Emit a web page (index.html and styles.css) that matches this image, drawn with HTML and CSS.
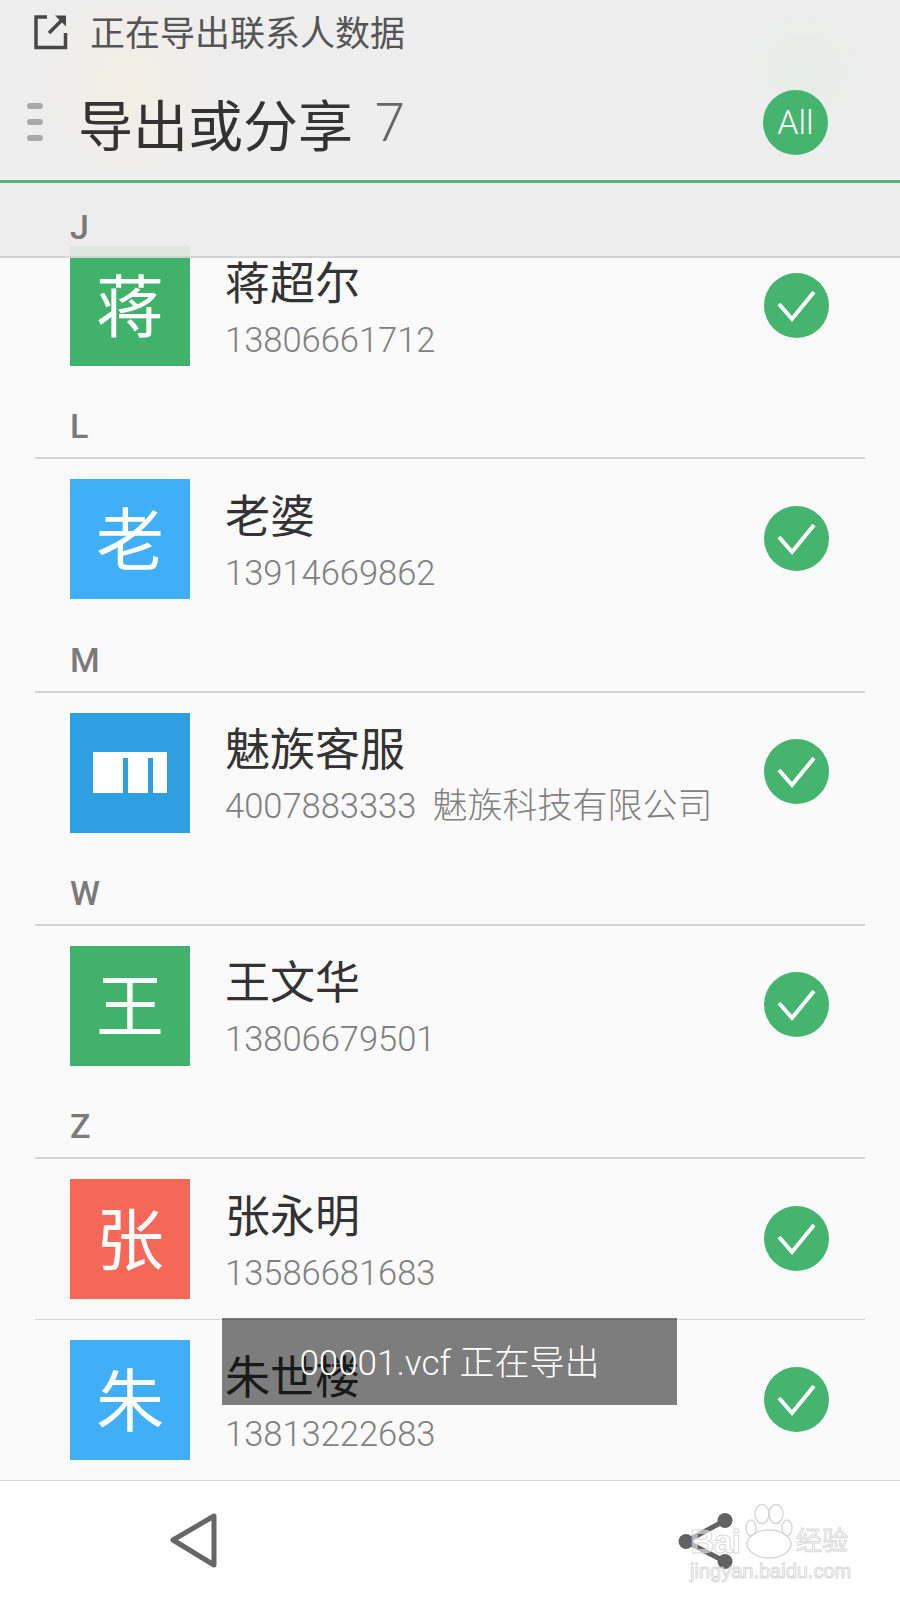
FILE: index.html

```html
<!DOCTYPE html>
<html>
<head>
<meta charset="UTF-8">
<title>导出或分享</title>
<link rel="stylesheet" href="styles.css">
</head>
<body>
<div class="page">

<header class="top">
  <div class="status">
    <svg class="status-icon" viewBox="0 0 34 36">
      <path d="M13 3H2V33.500H31.500V19" fill="none" stroke="#484848" stroke-width="3.500"/>
      <path d="M15 19L28 6" fill="none" stroke="#484848" stroke-width="3.500"/>
      <path d="M21 1.500H32V12.500Z" fill="#484848"/>
    </svg>
    <span>正在导出联系人数据</span>
  </div>
  <div class="titlebar">
    <div class="handle"><i></i><i></i><i></i></div>
    <h1>导出或分享</h1>
    <span class="count">7</span>
    <div class="all">All</div>
  </div>
</header>

<main class="list">
  <div class="pinned">J</div>

  <div class="row">
    <div class="avatar green">蒋</div>
    <div class="info"><div class="name">蒋超尔</div><div class="phone">13806661712</div></div>
    <svg class="tick" viewBox="0 0 65 65"><circle cx="32.500" cy="32.500" r="32.500"/><path d="M15 31L28 46L50 19"/></svg>
  </div>

  <div class="head">L</div>
  <div class="row">
    <div class="avatar blue">老</div>
    <div class="info"><div class="name">老婆</div><div class="phone">13914669862</div></div>
    <svg class="tick" viewBox="0 0 65 65"><circle cx="32.500" cy="32.500" r="32.500"/><path d="M15 31L28 46L50 19"/></svg>
  </div>

  <div class="head">M</div>
  <div class="row">
    <div class="avatar meizu">
      <svg class="meizu-logo" viewBox="0 0 74 41"><path d="M0 0H74V41H60V6H55V41H35V6H30V41H0Z" fill="#fff"/></svg>
    </div>
    <div class="info"><div class="name">魅族客服</div><div class="phone">4007883333<span class="company">魅族科技有限公司</span></div></div>
    <svg class="tick" viewBox="0 0 65 65"><circle cx="32.500" cy="32.500" r="32.500"/><path d="M15 31L28 46L50 19"/></svg>
  </div>

  <div class="head">W</div>
  <div class="row">
    <div class="avatar green">王</div>
    <div class="info"><div class="name">王文华</div><div class="phone">13806679501</div></div>
    <svg class="tick" viewBox="0 0 65 65"><circle cx="32.500" cy="32.500" r="32.500"/><path d="M15 31L28 46L50 19"/></svg>
  </div>

  <div class="head">Z</div>
  <div class="row divided">
    <div class="avatar red">张</div>
    <div class="info"><div class="name">张永明</div><div class="phone">13586681683</div></div>
    <svg class="tick" viewBox="0 0 65 65"><circle cx="32.500" cy="32.500" r="32.500"/><path d="M15 31L28 46L50 19"/></svg>
  </div>
  <div class="row">
    <div class="avatar blue">朱</div>
    <div class="info"><div class="name">朱世楼</div><div class="phone">13813222683</div></div>
    <svg class="tick" viewBox="0 0 65 65"><circle cx="32.500" cy="32.500" r="32.500"/><path d="M15 31L28 46L50 19"/></svg>
  </div>

  <div class="toast">00001.vcf 正在导出</div>
</main>

<footer class="bottom">
  <svg class="back" viewBox="0 0 52 60"><path d="M5 29L46 5V54Z"/></svg>
  <svg class="share" viewBox="0 0 60 64">
    <path d="M49 11.500L10 32.500L49 52.500" fill="none" stroke="#626262" stroke-width="5"/>
    <circle cx="49" cy="11.500" r="7.500"/><circle cx="10" cy="32.500" r="7.500"/><circle cx="49" cy="52.500" r="7.500"/>
  </svg>
</footer>

<div class="watermark">
  <div class="mark-top">
    <span class="mark-bai">Bai</span>
    <svg class="paw" viewBox="0 0 48 55">
      <ellipse cx="6" cy="24" rx="5" ry="8"/>
      <ellipse cx="17" cy="10" rx="7" ry="9.500"/>
      <ellipse cx="31" cy="10" rx="7" ry="9.500"/>
      <ellipse cx="42" cy="24" rx="5" ry="8"/>
      <ellipse cx="24" cy="40" rx="22" ry="14"/>
      <text x="24" y="47" text-anchor="middle">du</text>
    </svg>
    <span class="mark-cn">经验</span>
  </div>
  <div class="mark-url">jingyan.baidu.com</div>
</div>

</div>
</body>
</html>
```

FILE: styles.css

```css
body {
  margin: 0;
  font-family: Roboto, "Noto Sans CJK SC", sans-serif;
  background-color: #fafafa;
}
.page {
  position: relative;
  display: flex;
  flex-direction: column;
  width: 900px;
  height: 1600px;
  overflow: hidden;
}

/* top */
.top {
  height: 180px;
  flex: none;
  border-bottom: 3px solid #52b27a;
  background:
    radial-gradient(circle at 130px 85px, rgba(250, 240, 215, 0.45), rgba(250, 240, 215, 0) 90px),
    radial-gradient(circle at 805px 70px, rgba(222, 235, 225, 0.5), rgba(222, 235, 225, 0) 70px),
    #eeeeee;
}
.status {
  display: flex;
  align-items: center;
  height: 60px;
  padding-left: 34px;
  font-size: 35px;
  color: #555;
}
.status-icon {
  width: 34px;
  height: 36px;
  margin-right: 22px;
  margin-top: 4px;
}
.titlebar {
  display: flex;
  align-items: center;
  height: 120px;
  padding: 4px 72px 0 27px;
  box-sizing: border-box;
}
.handle {
  display: flex;
  flex-direction: column;
  gap: 10px;
  width: 16px;
}
.handle i {
  height: 6px;
  border-radius: 3px;
  background: #aaa;
}
h1 {
  margin: 0 0 0 35px;
  font-size: 55px;
  font-weight: 400;
  color: #333;
}
.count {
  margin-left: 22px;
  font-size: 54px;
  font-weight: 300;
  color: #666;
}
.all {
  width: 65px;
  height: 65px;
  margin-left: auto;
  border-radius: 50%;
  background: #44b46f;
  color: #fff;
  font-size: 34px;
  font-weight: 300;
  line-height: 65px;
  text-align: center;
}

/* list */
.list {
  position: relative;
  flex: 1;
  min-height: 0;
  padding-top: 43px;
  overflow: hidden;
}
.pinned {
  position: absolute;
  top: 0;
  left: 0;
  right: 0;
  z-index: 2;
  height: 75px;
  padding-left: 70px;
  box-sizing: border-box;
  border-bottom: 2px solid #d4d4d4;
  background: rgba(236, 236, 236, 0.92);
  color: #7a7a7a;
  font-size: 34px;
  font-weight: 500;
  line-height: 88px;
}
.head {
  display: flex;
  align-items: flex-end;
  height: 73.330px;
  margin: 0 35px;
  padding: 0 0 14px 35px;
  box-sizing: border-box;
  border-bottom: 2px solid #d4d4d4;
  color: #7a7a7a;
  font-size: 34px;
  font-weight: 500;
  line-height: 34px;
}
.row {
  display: flex;
  align-items: center;
  height: 160px;
  padding: 0 71px 0 70px;
}
.row.divided {
  position: relative;
}
.row.divided::after {
  content: "";
  position: absolute;
  left: 35px;
  right: 35px;
  bottom: -1px;
  height: 1px;
  background: #d4d4d4;
}
.row.divided + .row {
  margin-top: 1px;
}
.avatar {
  display: flex;
  align-items: center;
  justify-content: center;
  width: 120px;
  height: 120px;
  flex: none;
  padding-bottom: 8px;
  box-sizing: border-box;
  color: #fff;
  font-size: 68px;
}
.green { background: #41b26c; }
.blue { background: #41aef8; }
.red { background: #f56857; }
.meizu { background: #2e9fe0; padding-bottom: 0; }
.meizu-logo {
  width: 74px;
  height: 41px;
}
.info {
  display: flex;
  flex-direction: column;
  gap: 7px;
  margin-left: 35px;
  padding-top: 4px;
}
.name {
  font-size: 45px;
  line-height: 56px;
  color: #333;
}
.phone {
  font-size: 34.500px;
  font-weight: 300;
  line-height: 40px;
  color: #808080;
}
.company {
  margin-left: 16px;
  font-size: 35px;
}
.tick {
  width: 65px;
  height: 65px;
  margin: 0 0 2px auto;
  flex: none;
}
.tick circle {
  fill: #44b46f;
}
.tick path {
  fill: none;
  stroke: #fff;
  stroke-width: 4;
}
.toast {
  position: absolute;
  top: 1135px;
  left: 222px;
  width: 455px;
  height: 87px;
  background: rgba(0, 0, 0, 0.5);
  color: #fff;
  font-size: 35px;
  font-weight: 300;
  line-height: 91px;
  text-align: center;
}

/* bottom */
.bottom {
  display: flex;
  align-items: center;
  justify-content: space-between;
  flex: none;
  height: 119px;
  padding: 0 164px 0 168px;
  border-top: 1px solid #d4d4d4;
  background: #fff;
}
.back {
  width: 52px;
  height: 60px;
}
.back path {
  fill: none;
  stroke: #666;
  stroke-width: 5;
  stroke-linejoin: round;
}
.share {
  width: 60px;
  height: 64px;
}
.share circle {
  fill: #626262;
}

/* site watermark */
.watermark {
  position: absolute;
  left: 690px;
  top: 1503px;
  width: 165px;
  color: rgba(255, 255, 255, 0.55);
  -webkit-text-stroke: 1px rgba(200, 200, 200, 0.7);
}
.mark-top {
  display: flex;
  align-items: flex-end;
  height: 53px;
}
.mark-bai {
  width: 55px;
  font-family: "Liberation Sans", sans-serif;
  font-size: 34px;
  font-weight: 700;
  line-height: 30px;
  letter-spacing: -1px;
}
.paw {
  width: 48px;
  height: 55px;
  flex: none;
  margin-bottom: -3px;
}
.paw ellipse {
  fill: rgba(255, 255, 255, 0.55);
  stroke: rgba(200, 200, 200, 0.7);
  stroke-width: 1.500;
}
.paw text {
  font-family: "Liberation Sans", sans-serif;
  font-size: 20px;
  fill: rgba(255, 255, 255, 0.55);
}
.mark-cn {
  margin-left: 3px;
  font-size: 26px;
  line-height: 30px;
}
.mark-url {
  margin-top: 3px;
  font-family: "Liberation Sans", sans-serif;
  font-size: 20px;
  line-height: 24px;
}
```
